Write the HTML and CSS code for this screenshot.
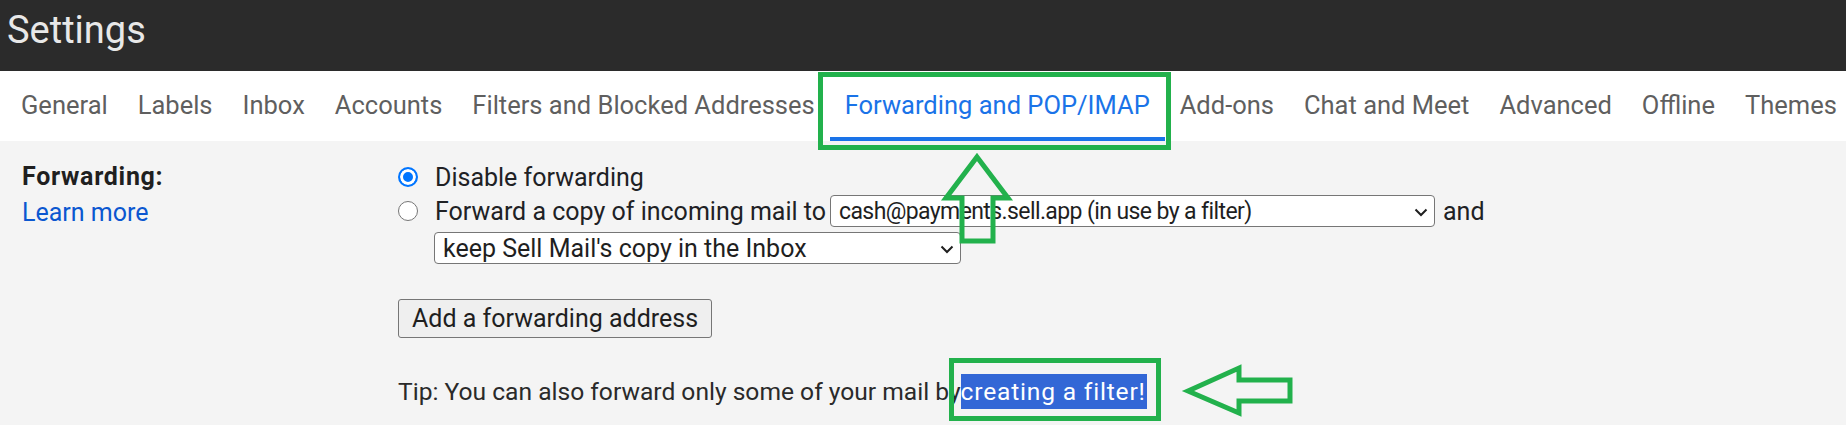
FILE: index.html
```html
<!DOCTYPE html>
<html lang="en">
  <head>
    <meta charset="UTF-8" />
    <meta name="viewport" content="width=device-width, initial-scale=1.0" />
    <title>Settings</title>
    <link rel="stylesheet" href="styles.css">
  </head>
  <body>
    <header class="topbar">
      <h1>Settings</h1>
    </header>

    <nav class="tabs">
      <a href="#">General</a>
      <a href="#">Labels</a>
      <a href="#">Inbox</a>
      <a href="#">Accounts</a>
      <a href="#">Filters and Blocked Addresses</a>
      <a href="#" class="active">Forwarding and POP/IMAP</a>
      <a href="#">Add-ons</a>
      <a href="#">Chat and Meet</a>
      <a href="#">Advanced</a>
      <a href="#">Offline</a>
      <a href="#">Themes</a>
    </nav>

    <main class="content">
      <div class="label">
        <div class="title">Forwarding:</div>
        <a href="#" class="learn">Learn more</a>
      </div>

      <div class="options">
        <label class="option first">
          <input type="radio" name="fwd" checked />
          <span>Disable forwarding</span>
        </label>
        <label class="option">
          <input type="radio" name="fwd" />
          <span>Forward a copy of incoming mail to</span>
          <span class="select wide">
            <select>
              <option>cash@payments.sell.app (in use by a filter)</option>
            </select>
            <svg width="14" height="9" viewBox="0 0 14 9"><path d="M1.5 1.5 L7 7 L12.5 1.5" fill="none" stroke="#1f1f1f" stroke-width="2"/></svg>
          </span>
          <span>and</span>
        </label>
        <div class="keep">
          <span class="select narrow">
            <select>
              <option>keep Sell Mail's copy in the Inbox</option>
            </select>
            <svg width="14" height="9" viewBox="0 0 14 9"><path d="M1.5 1.5 L7 7 L12.5 1.5" fill="none" stroke="#1f1f1f" stroke-width="2"/></svg>
          </span>
        </div>

        <button class="add">Add a forwarding address</button>

        <p class="tip">Tip: You can also forward only some of your mail by<span class="picked"> creating a filter!</span></p>
      </div>
    </main>

    <!-- annotation marks drawn over the screenshot -->
    <svg class="marks" width="1846" height="425" viewBox="0 0 1846 425">
      <g fill="none" stroke="#22b14c" stroke-width="5">
        <rect x="820.5" y="74.5" width="348" height="73" />
        <rect x="951.5" y="360.5" width="207" height="58" />
        <polygon points="977,157 1008,198 993,198 993,241 962,241 962,198 946,198" />
        <polygon points="1188,391 1239,368 1239,380 1290,380 1290,401 1239,401 1239,413" />
      </g>
    </svg>
  </body>
</html>
```

FILE: styles.css
```css
body {
  margin: 0;
  padding: 0;
  font-family: Roboto, "Liberation Sans", sans-serif;
  background-color: #f4f4f4;
  color: #202124;
  position: relative;
  height: 425px;
  overflow: hidden;
}
.topbar {
  background-color: #2b2b2b;
  height: 71px;
  padding: 8px 0 0 7px;
  box-sizing: border-box;
}
.topbar h1 {
  margin: 0;
  font-size: 38px;
  font-weight: 400;
  color: #e8e8e8;
  line-height: normal;
}
.tabs {
  display: flex;
  background: white;
  height: 70px;
  padding-left: 6px;
  white-space: nowrap;
}
.tabs a {
  display: block;
  box-sizing: border-box;
  height: 70px;
  padding: 19px 15px 0;
  font-size: 25.5px;
  line-height: normal;
  color: #5f5f5f;
  text-decoration: none;
  border-bottom: 4px solid transparent;
}
.tabs a.active {
  color: #1a73e8;
  border-bottom-color: #1a73e8;
}
.content {
  display: grid;
  grid-template-columns: 376px 1fr;
  padding: 18px 0 0 22px;
  font-size: 25px;
}
.label {
  line-height: 36px;
}
.label .title {
  font-weight: 700;
  color: #1f1f1f;
  letter-spacing: 0.7px;
}
.learn {
  color: #0b57d0;
  text-decoration: none;
}
.options {
  display: flex;
  flex-direction: column;
  align-items: flex-start;
}
.option {
  display: flex;
  align-items: center;
  height: 32px;
  white-space: nowrap;
}
.option.first {
  height: 36px;
}
.option input {
  appearance: none;
  width: 20px;
  height: 20px;
  margin: 0 17px 0 0;
  border: 1.5px solid #767676;
  border-radius: 50%;
  background: white;
  box-sizing: border-box;
}
.option input:checked {
  border: 2px solid #0075ff;
  background: #0075ff;
  box-shadow: inset 0 0 0 3px white;
}
.select {
  position: relative;
  display: inline-flex;
  margin: 0 8px 0 4px;
}
.select select {
  appearance: none;
  height: 32px;
  box-sizing: border-box;
  border: 1px solid #767676;
  border-radius: 4px;
  background: white;
  font-family: inherit;
  color: #1f1f1f;
  padding: 0 30px 0 8px;
}
.select.wide select {
  width: 605px;
  font-size: 23px;
  letter-spacing: -0.6px;
}
.select.narrow select {
  width: 527px;
  font-size: 25px;
}
.select svg {
  position: absolute;
  right: 7px;
  top: 13px;
  pointer-events: none;
}
.keep {
  margin: 5px 0 0 32px;
}
.add {
  margin-top: 35px;
  height: 39px;
  padding: 0 13px;
  font-family: inherit;
  font-size: 25px;
  color: #1f1f1f;
  background: #efefef;
  border: 1px solid #767676;
  border-radius: 3px;
}
.tip {
  margin: 36px 0 0;
  font-size: 24.6px;
  line-height: 35px;
  white-space: nowrap;
  color: #2a2a2a;
}
.picked {
  display: inline-block;
  background: #3367d6;
  color: white;
  padding-right: 1px;
  letter-spacing: 0.8px;
}
.marks {
  position: absolute;
  top: 0;
  left: 0;
}
```
